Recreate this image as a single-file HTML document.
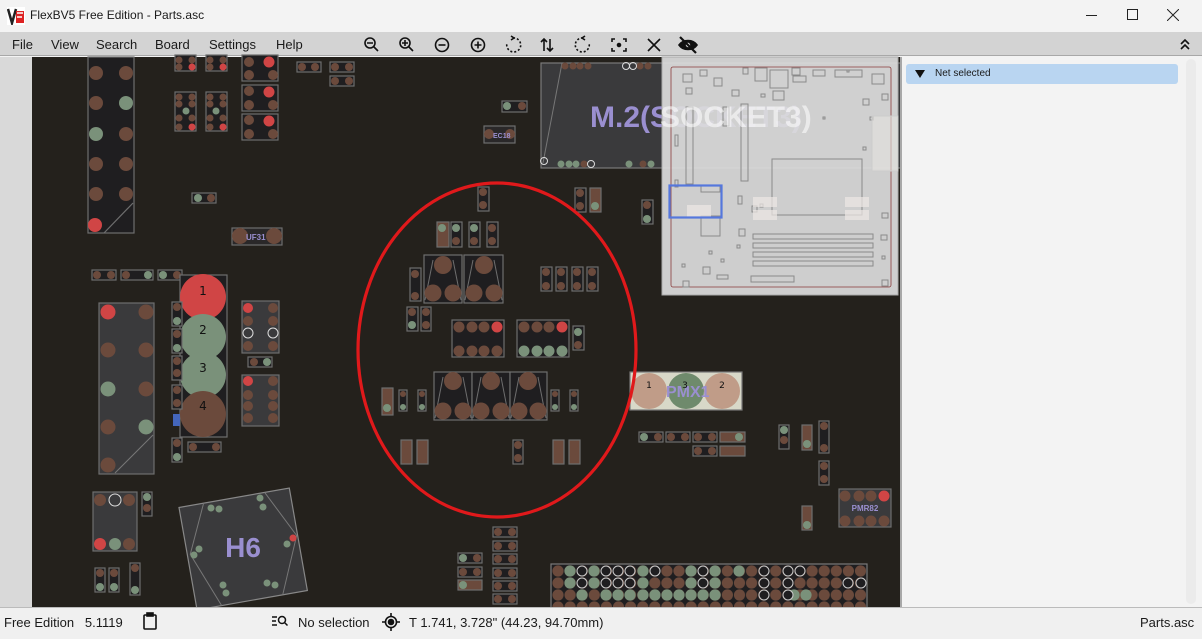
<!DOCTYPE html>
<html><head><meta charset="utf-8"><style>
*{margin:0;padding:0;box-sizing:border-box}
body{width:1202px;height:639px;overflow:hidden;background:#f3f3f3;font-family:"Liberation Sans","DejaVu Sans",sans-serif;position:relative}
.t{position:absolute;font-size:13px;color:#1a1a1a;white-space:nowrap}
</style></head><body>
<!-- title bar -->
<div style="position:absolute;left:0;top:0;width:1202px;height:32px;background:#f3f3f3"></div>
<svg style="position:absolute;left:7px;top:7px" width="18" height="18"><rect x="0" y="0" width="18" height="18" fill="#fff"/><path d="M1 2 L5 16 L9 2" stroke="#222" stroke-width="2.5" fill="none"/><rect x="9" y="4" width="8" height="12" fill="#d22"/><path d="M10 6h6M10 10h5" stroke="#fff" stroke-width="1.5"/></svg>
<div class="t" style="left:30px;top:8px;font-size:12px">FlexBV5 Free Edition - Parts.asc</div>
<div style="position:absolute;left:1086px;top:15px;width:11px;height:1px;background:#222"></div>
<div style="position:absolute;left:1127px;top:9px;width:11px;height:11px;border:1px solid #222"></div>
<svg style="position:absolute;left:1167px;top:9px" width="12" height="12"><path d="M0 0L12 12M12 0L0 12" stroke="#222" stroke-width="1"/></svg>
<!-- menu bar -->
<div style="position:absolute;left:0;top:32px;width:1202px;height:24px;background:#d3d3d3;border-bottom:1px solid #a8a8a8"></div>
<div class="t" style="left:12px;top:37px">File</div>
<div class="t" style="left:51px;top:37px">View</div>
<div class="t" style="left:96px;top:37px">Search</div>
<div class="t" style="left:155px;top:37px">Board</div>
<div class="t" style="left:209px;top:37px">Settings</div>
<div class="t" style="left:276px;top:37px">Help</div>
<svg style="position:absolute;left:360px;top:35px" width="340" height="20" fill="none" stroke="#111" stroke-width="1.6">
<circle cx="10" cy="8" r="5"/><path d="M14 12l4 4M7 8h6"/>
<g transform="translate(35,0)"><circle cx="10" cy="8" r="5"/><path d="M14 12l4 4M7 8h6M10 5v6"/></g>
<g transform="translate(70,0)"><circle cx="12" cy="10" r="6.5"/><path d="M8.5 10h7"/></g>
<g transform="translate(106,0)"><circle cx="12" cy="10" r="6.5"/><path d="M8.5 10h7M12 6.5v7"/></g>
<g transform="translate(141,0)"><path d="M12 3 A7 7 0 1 1 6 8" stroke-dasharray="2 2"/><path d="M10 1l3 2-3 2"/></g>
<g transform="translate(176,0)"><path d="M8 4v12M5 7l3-3 3 3M14 4v12M11 13l3 3 3-3"/></g>
<g transform="translate(211,0)"><path d="M12 3 A7 7 0 1 0 18 8" stroke-dasharray="2 2"/><path d="M14 1l-3 2 3 2"/></g>
<g transform="translate(247,0)"><path d="M5 7V4h3M16 4h3v3M19 13v3h-3M8 16H5v-3"/><circle cx="12" cy="10" r="1.5" fill="#111"/></g>
<g transform="translate(282,0)"><path d="M6 4l12 12M18 4L6 16"/></g>
<g transform="translate(316,0)"><path d="M3 10c4-6 14-6 18 0c-4 6-14 6-18 0z" fill="#111"/><circle cx="12" cy="10" r="3" fill="#d3d3d3"/><path d="M4 2l16 16" stroke-width="2.2"/></g>
</svg>
<svg style="position:absolute;left:1178px;top:37px" width="14" height="14" fill="none" stroke="#111" stroke-width="1.6"><path d="M3 7l4-4 4 4M3 12l4-4 4 4"/></svg>
<!-- left strip -->
<div style="position:absolute;left:0;top:57px;width:32px;height:551px;background:#d9d9d9"></div>
<!-- canvas -->
<svg style="position:absolute;left:0;top:0" width="902" height="608" viewBox="0 0 902 608">
<defs>
<pattern id="bga" x="552" y="565" width="12.1" height="12" patternUnits="userSpaceOnUse"><circle cx="6" cy="6" r="5.6" fill="#6b4a3c"/></pattern>
</defs>
<rect x="32" y="57" width="870" height="551" fill="#24211c"/>
<g stroke="#6e6e6e" stroke-width="1.2">
<rect x="88" y="57" width="46" height="176" fill="#1f1e20"/>
<path d="M104 233 L133 203" fill="none"/>
</g>
<g stroke="none">
<circle cx="96" cy="73" r="7" fill="#6b4a3c"/><circle cx="126" cy="73" r="7" fill="#6b4a3c"/>
<circle cx="96" cy="103" r="7" fill="#6b4a3c"/><circle cx="126" cy="103" r="7" fill="#7a917a"/>
<circle cx="96" cy="134" r="7" fill="#7a917a"/><circle cx="126" cy="134" r="7" fill="#6b4a3c"/>
<circle cx="96" cy="164" r="7" fill="#6b4a3c"/><circle cx="126" cy="164" r="7" fill="#6b4a3c"/>
<circle cx="96" cy="194" r="7" fill="#6b4a3c"/><circle cx="126" cy="194" r="7" fill="#6b4a3c"/>
<circle cx="95" cy="225" r="7" fill="#d04545"/>
</g>
<g stroke="#6e6e6e" stroke-width="1.2" fill="#1f1e20">
<rect x="175" y="55" width="21" height="16"/><rect x="206" y="55" width="21" height="16"/>
<rect x="175" y="92" width="21" height="39"/><rect x="206" y="92" width="21" height="39"/>
<rect x="242" y="55" width="36" height="26"/><rect x="242" y="85" width="36" height="26"/><rect x="242" y="114" width="36" height="26"/>
<rect x="297" y="62" width="24" height="10"/><rect x="330" y="62" width="24" height="10"/><rect x="330" y="76" width="24" height="10"/>
<rect x="192" y="193" width="24" height="10"/>
<rect x="232" y="228" width="50" height="17" fill="#2a2829"/>
<rect x="92" y="270" width="24" height="10"/><rect x="121" y="270" width="32" height="10"/><rect x="158" y="270" width="24" height="10"/>
<rect x="502" y="101" width="25" height="11"/>
<rect x="484" y="126" width="31" height="17" fill="#2a2829"/>
</g>
<g fill="#6b4a3c">
<circle cx="179" cy="60" r="3.5"/><circle cx="192" cy="60" r="3.5"/><circle cx="210" cy="60" r="3.5"/><circle cx="223" cy="60" r="3.5"/>
<circle cx="179" cy="67" r="3.5"/><circle cx="210" cy="67" r="3.5"/>
<circle cx="179" cy="97" r="3.5"/><circle cx="192" cy="97" r="3.5"/><circle cx="179" cy="104" r="3.5"/><circle cx="192" cy="104" r="3.5"/>
<circle cx="179" cy="118" r="3.5"/><circle cx="192" cy="118" r="3.5"/><circle cx="179" cy="127" r="3.5"/>
<circle cx="210" cy="97" r="3.5"/><circle cx="223" cy="97" r="3.5"/><circle cx="210" cy="104" r="3.5"/><circle cx="223" cy="104" r="3.5"/>
<circle cx="210" cy="118" r="3.5"/><circle cx="223" cy="118" r="3.5"/><circle cx="210" cy="127" r="3.5"/>
<circle cx="249" cy="62" r="5"/><circle cx="249" cy="75" r="5"/><circle cx="273" cy="75" r="5"/>
<circle cx="249" cy="91" r="5"/><circle cx="249" cy="105" r="5"/><circle cx="273" cy="105" r="5"/>
<circle cx="249" cy="120" r="5"/><circle cx="249" cy="134" r="5"/><circle cx="273" cy="134" r="5"/>
<circle cx="302" cy="67" r="4"/><circle cx="315" cy="67" r="4"/><circle cx="335" cy="67" r="4"/><circle cx="349" cy="67" r="4"/><circle cx="335" cy="81" r="4"/><circle cx="349" cy="81" r="4"/>
<circle cx="211" cy="198" r="4"/><circle cx="240" cy="236" r="8"/><circle cx="274" cy="236" r="8"/>
<circle cx="97" cy="275" r="4"/><circle cx="111" cy="275" r="4"/><circle cx="126" cy="275" r="4"/><circle cx="177" cy="275" r="4"/>
<circle cx="522" cy="106" r="4"/><circle cx="489" cy="134" r="5"/><circle cx="510" cy="134" r="5"/>
</g>
<g fill="#d04545"><circle cx="192" cy="67" r="3.5"/><circle cx="223" cy="67" r="3.5"/><circle cx="192" cy="127" r="3.5"/><circle cx="223" cy="127" r="3.5"/><circle cx="269" cy="62" r="5.5"/><circle cx="269" cy="92" r="5.5"/><circle cx="269" cy="121" r="5.5"/></g>
<g fill="#7a917a"><circle cx="186" cy="111" r="3.5"/><circle cx="216" cy="111" r="3.5"/><circle cx="198" cy="198" r="4"/><circle cx="148" cy="275" r="4"/><circle cx="163" cy="275" r="4"/><circle cx="507" cy="106" r="4"/></g>
<text x="246" y="240" font-family="Liberation Sans" font-weight="bold" font-size="8" fill="#9a8fd0">UF31</text>
<text x="493" y="138" font-family="Liberation Sans" font-weight="bold" font-size="7" fill="#9a8fd0">EC18</text>
<rect x="541" y="63" width="360" height="105" fill="#3a3a3c" stroke="#7a7a7a" stroke-width="1.2"/>
<path d="M543 163 L562 63" stroke="#777" fill="none"/>
<g fill="#6b4a3c"><circle cx="565" cy="66" r="3.5"/><circle cx="573" cy="66" r="3.5"/><circle cx="580" cy="66" r="3.5"/><circle cx="588" cy="66" r="3.5"/><circle cx="640" cy="66" r="3.5"/><circle cx="648" cy="66" r="3.5"/><circle cx="584" cy="164" r="3.5"/><circle cx="643" cy="164" r="3.5"/></g>
<g fill="#7a917a"><circle cx="561" cy="164" r="3.5"/><circle cx="569" cy="164" r="3.5"/><circle cx="576" cy="164" r="3.5"/><circle cx="629" cy="164" r="3.5"/><circle cx="651" cy="164" r="3.5"/></g>
<g fill="none" stroke="#ddd"><circle cx="626" cy="66" r="3.5"/><circle cx="633" cy="66" r="3.5"/><circle cx="544" cy="161" r="3.5"/><circle cx="591" cy="164" r="3.5"/></g>
<text x="590" y="127" font-family="Liberation Sans" font-weight="bold" font-size="30" fill="#9a8fd0">M.2(SOCKET3)</text>
<rect x="180" y="275" width="47" height="162" fill="#1f1e20" stroke="#6e6e6e" stroke-width="1.2"/>
<circle cx="203" cy="297" r="23" fill="#d04545"/><circle cx="203" cy="337" r="23" fill="#7a917a"/><circle cx="203" cy="375" r="23" fill="#7a917a"/><circle cx="203" cy="414" r="23" fill="#6b4a3c"/>
<g font-family="DejaVu Sans" font-size="12" fill="#111" text-anchor="middle"><text x="203" y="295">1</text><text x="203" y="334">2</text><text x="203" y="372">3</text><text x="203" y="410">4</text></g>
<rect x="99" y="303" width="55" height="171" fill="#3a3a3c" stroke="#6e6e6e" stroke-width="1.2"/>
<path d="M115 473 L153 435" stroke="#777"/>
<circle cx="108" cy="312" r="7.5" fill="#d04545"/><circle cx="146" cy="312" r="7.5" fill="#6b4a3c"/>
<circle cx="108" cy="350" r="7.5" fill="#6b4a3c"/><circle cx="146" cy="350" r="7.5" fill="#6b4a3c"/>
<circle cx="108" cy="389" r="7.5" fill="#7a917a"/><circle cx="146" cy="389" r="7.5" fill="#6b4a3c"/>
<circle cx="108" cy="427" r="7.5" fill="#6b4a3c"/><circle cx="146" cy="427" r="7.5" fill="#7a917a"/>
<circle cx="108" cy="465" r="7.5" fill="#6b4a3c"/>
<g stroke="#6e6e6e" stroke-width="1.2" fill="#3a3a3c">
<rect x="242" y="301" width="37" height="52"/><rect x="242" y="375" width="37" height="51"/>
<rect x="93" y="492" width="44" height="59"/>
</g>
<g stroke="#6e6e6e" stroke-width="1.2" fill="#1f1e20">
<rect x="172" y="302" width="10" height="24"/><rect x="172" y="329" width="10" height="24"/><rect x="172" y="356" width="10" height="24"/><rect x="172" y="385" width="10" height="24"/><rect x="172" y="438" width="10" height="24"/>
<rect x="248" y="357" width="24" height="10"/><rect x="188" y="442" width="33" height="10"/>
<rect x="142" y="492" width="10" height="24"/>
<rect x="95" y="568" width="10" height="24"/><rect x="109" y="568" width="10" height="24"/><rect x="130" y="563" width="10" height="32"/>
</g>
<rect x="173" y="414" width="7" height="12" fill="#4466bb"/>
<g fill="#6b4a3c"><circle cx="248" cy="321" r="5"/><circle cx="273" cy="321" r="5"/><circle cx="273" cy="308" r="5"/><circle cx="248" cy="346" r="5"/><circle cx="273" cy="346" r="5"/>
<circle cx="273" cy="381" r="5"/><circle cx="248" cy="395" r="5"/><circle cx="273" cy="395" r="5"/><circle cx="248" cy="406" r="5"/><circle cx="273" cy="406" r="5"/><circle cx="248" cy="418" r="5"/><circle cx="273" cy="418" r="5"/>
<circle cx="254" cy="362" r="4"/><circle cx="193" cy="447" r="4"/><circle cx="216" cy="447" r="4"/>
<circle cx="177" cy="307" r="4"/><circle cx="177" cy="334" r="4"/><circle cx="177" cy="361" r="4"/><circle cx="177" cy="373" r="4"/><circle cx="177" cy="390" r="4"/><circle cx="177" cy="403" r="4"/><circle cx="177" cy="443" r="4"/>
<circle cx="100" cy="500" r="6"/><circle cx="129" cy="500" r="6"/><circle cx="129" cy="544" r="6"/><circle cx="147" cy="508" r="4"/>
<circle cx="100" cy="573" r="4"/><circle cx="114" cy="573" r="4"/><circle cx="135" cy="568" r="4"/></g>
<g fill="#7a917a"><circle cx="177" cy="321" r="4"/><circle cx="177" cy="348" r="4"/><circle cx="177" cy="457" r="4"/><circle cx="267" cy="362" r="4"/><circle cx="115" cy="544" r="6"/><circle cx="147" cy="497" r="4"/><circle cx="100" cy="587" r="4"/><circle cx="114" cy="587" r="4"/><circle cx="135" cy="590" r="4"/></g>
<g fill="#d04545"><circle cx="248" cy="308" r="5"/><circle cx="248" cy="381" r="5"/><circle cx="100" cy="544" r="6"/></g>
<g fill="none" stroke="#ddd"><circle cx="248" cy="333" r="5"/><circle cx="273" cy="333" r="5"/><circle cx="115" cy="500" r="6"/></g>
<g transform="rotate(-10 243 548)">
<rect x="187" y="497" width="112" height="104" fill="#3a3a3c" stroke="#888" stroke-width="1.2"/>
<path d="M212 497 L190 545 L212 601 M274 497 L298 545 L274 601" stroke="#777" fill="none"/>
</g>
<g fill="#7a917a"><circle cx="211" cy="508" r="3.5"/><circle cx="219" cy="509" r="3.5"/><circle cx="260" cy="498" r="3.5"/><circle cx="263" cy="507" r="3.5"/><circle cx="194" cy="555" r="3.5"/><circle cx="199" cy="549" r="3.5"/><circle cx="287" cy="544" r="3.5"/><circle cx="223" cy="585" r="3.5"/><circle cx="226" cy="593" r="3.5"/><circle cx="267" cy="583" r="3.5"/><circle cx="275" cy="585" r="3.5"/></g>
<circle cx="293" cy="538" r="3.5" fill="#d04545"/>
<text x="243" y="557" text-anchor="middle" font-family="Liberation Sans" font-weight="bold" font-size="28" fill="#9a8fd0">H6</text>
<g stroke="#6e6e6e" stroke-width="1.2" fill="#1f1e20">
<rect x="478" y="187" width="11" height="24"/>
<rect x="437" y="222" width="12" height="25" fill="#6b4a3c"/><rect x="451" y="222" width="11" height="25"/><rect x="469" y="222" width="11" height="25"/><rect x="487" y="222" width="11" height="25"/>
<rect x="410" y="268" width="11" height="33"/>
<rect x="407" y="307" width="11" height="24"/><rect x="421" y="307" width="10" height="24"/>
<rect x="573" y="326" width="11" height="24"/>
<rect x="382" y="388" width="11" height="27" fill="#6b4a3c"/><rect x="399" y="390" width="8" height="21"/><rect x="418" y="390" width="8" height="21"/><rect x="551" y="390" width="8" height="21"/><rect x="570" y="390" width="8" height="21"/>
<rect x="401" y="440" width="11" height="24" fill="#6b4a3c"/><rect x="417" y="440" width="11" height="24" fill="#6b4a3c"/><rect x="513" y="440" width="10" height="24"/><rect x="553" y="440" width="11" height="24" fill="#6b4a3c"/><rect x="569" y="440" width="11" height="24" fill="#6b4a3c"/>
<rect x="575" y="188" width="11" height="24"/><rect x="590" y="188" width="11" height="24" fill="#6b4a3c"/>
<rect x="541" y="267" width="11" height="24"/><rect x="556" y="267" width="11" height="24"/><rect x="572" y="267" width="11" height="24"/><rect x="587" y="267" width="11" height="24"/>
<rect x="642" y="200" width="11" height="24"/>
<rect x="779" y="425" width="10" height="24"/><rect x="802" y="425" width="10" height="25" fill="#6b4a3c"/><rect x="819" y="421" width="10" height="32"/><rect x="819" y="461" width="10" height="24"/><rect x="802" y="506" width="10" height="24" fill="#6b4a3c"/>
<rect x="639" y="432" width="24" height="10"/><rect x="666" y="432" width="24" height="10"/><rect x="693" y="432" width="24" height="10"/><rect x="720" y="432" width="25" height="10" fill="#6b4a3c"/><rect x="693" y="446" width="24" height="10"/><rect x="720" y="446" width="25" height="10" fill="#6b4a3c"/>
<rect x="493" y="527" width="24" height="10"/><rect x="493" y="541" width="24" height="10"/><rect x="493" y="554" width="24" height="10"/><rect x="493" y="568" width="24" height="10"/><rect x="493" y="581" width="24" height="10"/><rect x="493" y="594" width="24" height="10"/>
<rect x="458" y="553" width="24" height="10"/><rect x="458" y="567" width="24" height="10"/><rect x="458" y="580" width="24" height="10" fill="#6b4a3c"/>
</g>
<g fill="#6b4a3c">
<circle cx="483" cy="192" r="4"/><circle cx="483" cy="205" r="4"/><circle cx="456" cy="241" r="4"/><circle cx="474" cy="241" r="4"/><circle cx="492" cy="228" r="4"/><circle cx="492" cy="241" r="4"/>
<circle cx="415" cy="274" r="4"/><circle cx="415" cy="296" r="4"/><circle cx="412" cy="312" r="4"/><circle cx="426" cy="312" r="4"/><circle cx="426" cy="325" r="4"/><circle cx="578" cy="345" r="4"/>
<circle cx="387" cy="394" r="4"/><circle cx="403" cy="394" r="3"/><circle cx="422" cy="394" r="3"/><circle cx="555" cy="394" r="3"/><circle cx="574" cy="394" r="3"/>
<circle cx="406" cy="445" r="4"/><circle cx="406" cy="458" r="4"/><circle cx="422" cy="445" r="4"/><circle cx="422" cy="458" r="4"/><circle cx="518" cy="445" r="4"/><circle cx="518" cy="458" r="4"/><circle cx="558" cy="445" r="4"/><circle cx="558" cy="458" r="4"/><circle cx="574" cy="445" r="4"/><circle cx="574" cy="458" r="4"/>
<circle cx="580" cy="193" r="4"/><circle cx="580" cy="206" r="4"/><circle cx="595" cy="193" r="4"/>
<circle cx="546" cy="272" r="4"/><circle cx="546" cy="286" r="4"/><circle cx="561" cy="272" r="4"/><circle cx="561" cy="286" r="4"/><circle cx="577" cy="272" r="4"/><circle cx="577" cy="286" r="4"/><circle cx="592" cy="272" r="4"/><circle cx="592" cy="286" r="4"/>
<circle cx="647" cy="205" r="4"/>
<circle cx="784" cy="440" r="4"/><circle cx="807" cy="430" r="4"/><circle cx="824" cy="426" r="4"/><circle cx="824" cy="448" r="4"/><circle cx="824" cy="466" r="4"/><circle cx="824" cy="479" r="4"/><circle cx="807" cy="511" r="4"/>
<circle cx="658" cy="437" r="4"/><circle cx="671" cy="437" r="4"/><circle cx="685" cy="437" r="4"/><circle cx="698" cy="437" r="4"/><circle cx="712" cy="437" r="4"/><circle cx="725" cy="437" r="4"/><circle cx="698" cy="451" r="4"/><circle cx="712" cy="451" r="4"/><circle cx="725" cy="451" r="4"/><circle cx="739" cy="451" r="4"/>
<circle cx="498" cy="532" r="4"/><circle cx="512" cy="532" r="4"/><circle cx="498" cy="546" r="4"/><circle cx="512" cy="546" r="4"/><circle cx="498" cy="559" r="4"/><circle cx="512" cy="559" r="4"/><circle cx="498" cy="573" r="4"/><circle cx="512" cy="573" r="4"/><circle cx="498" cy="586" r="4"/><circle cx="512" cy="586" r="4"/><circle cx="498" cy="599" r="4"/><circle cx="512" cy="599" r="4"/>
<circle cx="477" cy="558" r="4"/><circle cx="463" cy="572" r="4"/><circle cx="477" cy="572" r="4"/><circle cx="477" cy="585" r="4"/>
</g>
<g fill="#7a917a">
<circle cx="442" cy="228" r="4"/><circle cx="456" cy="228" r="4"/><circle cx="474" cy="228" r="4"/><circle cx="412" cy="325" r="4"/><circle cx="578" cy="332" r="4"/>
<circle cx="387" cy="408" r="4"/><circle cx="403" cy="407" r="3"/><circle cx="422" cy="407" r="3"/><circle cx="555" cy="407" r="3"/><circle cx="574" cy="407" r="3"/>
<circle cx="595" cy="206" r="4"/><circle cx="647" cy="219" r="4"/>
<circle cx="784" cy="430" r="4"/><circle cx="807" cy="444" r="4"/><circle cx="807" cy="525" r="4"/>
<circle cx="644" cy="437" r="4"/><circle cx="739" cy="437" r="4"/><circle cx="463" cy="558" r="4"/><circle cx="463" cy="585" r="4"/>
</g>
<g stroke="#6e6e6e" stroke-width="1.2" fill="#1f1e20">
<rect x="424" y="255" width="38" height="48"/><rect x="464" y="255" width="39" height="48"/>
<rect x="434" y="372" width="38" height="48"/><rect x="472" y="372" width="38" height="48"/><rect x="510" y="372" width="37" height="48"/>
<rect x="452" y="320" width="52" height="37"/><rect x="517" y="320" width="52" height="37"/>
</g>
<g stroke="#6e6e6e" fill="none"><path d="M425 300L433 260M461 300L453 260M465 300L473 260M502 300L494 260M435 418L443 377M471 418L463 377M473 418L481 377M509 418L501 377M511 418L519 377M546 418L538 377"/></g>
<g fill="#6b4a3c">
<circle cx="443" cy="265" r="9"/><circle cx="433" cy="293" r="8.5"/><circle cx="453" cy="293" r="8.5"/>
<circle cx="484" cy="265" r="9"/><circle cx="474" cy="293" r="8.5"/><circle cx="494" cy="293" r="8.5"/>
<circle cx="453" cy="381" r="9"/><circle cx="443" cy="411" r="8.5"/><circle cx="463" cy="411" r="8.5"/>
<circle cx="491" cy="381" r="9"/><circle cx="481" cy="411" r="8.5"/><circle cx="501" cy="411" r="8.5"/>
<circle cx="528" cy="381" r="9"/><circle cx="519" cy="411" r="8.5"/><circle cx="538" cy="411" r="8.5"/>
<circle cx="459" cy="327" r="5.5"/><circle cx="472" cy="327" r="5.5"/><circle cx="484" cy="327" r="5.5"/>
<circle cx="459" cy="351" r="5.5"/><circle cx="472" cy="351" r="5.5"/><circle cx="484" cy="351" r="5.5"/><circle cx="497" cy="351" r="5.5"/>
<circle cx="524" cy="327" r="5.5"/><circle cx="537" cy="327" r="5.5"/><circle cx="549" cy="327" r="5.5"/>
</g>
<g fill="#7a917a"><circle cx="524" cy="351" r="5.5"/><circle cx="537" cy="351" r="5.5"/><circle cx="549" cy="351" r="5.5"/><circle cx="562" cy="351" r="5.5"/></g>
<g fill="#d04545"><circle cx="497" cy="327" r="5.5"/><circle cx="562" cy="327" r="5.5"/></g>
<rect x="630" y="372" width="112" height="38" fill="#d8d8c8" stroke="#777" stroke-width="1.2"/>
<circle cx="649" cy="391" r="18" fill="#c09c88"/><circle cx="686" cy="391" r="18" fill="#6f8a6c"/><circle cx="722" cy="391" r="18" fill="#c09c88"/>
<text x="666" y="397" font-family="Liberation Sans" font-weight="bold" font-size="16" fill="#9a8fd0">PMX1</text>
<g font-family="DejaVu Sans" font-size="9" fill="#111" text-anchor="middle"><text x="649" y="388">1</text><text x="685" y="388">3</text><text x="722" y="388">2</text></g>
<rect x="839" y="489" width="52" height="38" fill="#3a3a3c" stroke="#6e6e6e" stroke-width="1.2"/>
<g fill="#6b4a3c"><circle cx="845" cy="496" r="5.5"/><circle cx="859" cy="496" r="5.5"/><circle cx="871" cy="496" r="5.5"/><circle cx="845" cy="521" r="5.5"/><circle cx="859" cy="521" r="5.5"/><circle cx="871" cy="521" r="5.5"/><circle cx="884" cy="521" r="5.5"/></g>
<circle cx="884" cy="496" r="5.5" fill="#d04545"/>
<text x="865" y="511" text-anchor="middle" font-family="Liberation Sans" font-weight="bold" font-size="8" fill="#9a8fd0">PMR82</text>
<rect x="551" y="564" width="316" height="44" fill="#1f1e20" stroke="#7a7a7a" stroke-width="1.2"/>
<rect x="552" y="565" width="314" height="43" fill="url(#bga)"/>
<g fill="#7a917a"><circle cx="570" cy="571" r="5.6"/><circle cx="594" cy="571" r="5.6"/><circle cx="643" cy="571" r="5.6"/><circle cx="691" cy="571" r="5.6"/><circle cx="715" cy="571" r="5.6"/><circle cx="739" cy="571" r="5.6"/>
<circle cx="570" cy="583" r="5.6"/><circle cx="594" cy="583" r="5.6"/><circle cx="643" cy="583" r="5.6"/><circle cx="691" cy="583" r="5.6"/><circle cx="715" cy="583" r="5.6"/>
<circle cx="582" cy="595" r="5.6"/><circle cx="606" cy="595" r="5.6"/><circle cx="618" cy="595" r="5.6"/><circle cx="630" cy="595" r="5.6"/><circle cx="643" cy="595" r="5.6"/><circle cx="655" cy="595" r="5.6"/><circle cx="667" cy="595" r="5.6"/><circle cx="679" cy="595" r="5.6"/><circle cx="691" cy="595" r="5.6"/><circle cx="703" cy="595" r="5.6"/><circle cx="715" cy="595" r="5.6"/><circle cx="794" cy="595" r="5.6"/><circle cx="806" cy="595" r="5.6"/></g>
<g fill="#1f1e20" stroke="#ccc"><circle cx="582" cy="571" r="5"/><circle cx="606" cy="571" r="5"/><circle cx="618" cy="571" r="5"/><circle cx="630" cy="571" r="5"/><circle cx="655" cy="571" r="5"/><circle cx="703" cy="571" r="5"/><circle cx="764" cy="571" r="5"/><circle cx="788" cy="571" r="5"/><circle cx="800" cy="571" r="5"/>
<circle cx="582" cy="583" r="5"/><circle cx="606" cy="583" r="5"/><circle cx="618" cy="583" r="5"/><circle cx="630" cy="583" r="5"/><circle cx="703" cy="583" r="5"/><circle cx="764" cy="583" r="5"/><circle cx="788" cy="583" r="5"/><circle cx="848" cy="583" r="5"/><circle cx="861" cy="583" r="5"/>
<circle cx="764" cy="595" r="5"/><circle cx="788" cy="595" r="5"/></g>
<ellipse cx="497" cy="350" rx="139" ry="167" fill="none" stroke="#e0191b" stroke-width="3.2"/>
<!-- minimap -->
<rect x="662" y="57" width="236" height="238" fill="#dcdcdc" fill-opacity="0.93" stroke="#aaa"/>
<rect x="671" y="67" width="220" height="220" rx="2" fill="none" stroke="#8a3b3b" stroke-width="0.8"/>
<g fill="none" stroke="#8a8a8a" stroke-width="1">
<rect x="683" y="74" width="9" height="8"/><rect x="686" y="88" width="6" height="6"/><rect x="714" y="78" width="8" height="8"/><rect x="700" y="70" width="7" height="6"/><rect x="743" y="68" width="5" height="6"/>
<rect x="755" y="68" width="12" height="13"/><rect x="770" y="70" width="18" height="18"/><rect x="773" y="91" width="11" height="9"/><rect x="792" y="68" width="8" height="7"/><rect x="793" y="76" width="13" height="6"/><rect x="813" y="70" width="12" height="6"/><rect x="835" y="70" width="27" height="7"/>
<rect x="872" y="74" width="12" height="10"/><rect x="863" y="99" width="6" height="6"/><rect x="882" y="94" width="6" height="6"/><rect x="732" y="90" width="7" height="6"/><rect x="761" y="94" width="4" height="3"/>
<rect x="686" y="107" width="7" height="77"/><rect x="723" y="107" width="6" height="19"/><rect x="741" y="104" width="7" height="77"/>
<rect x="675" y="135" width="3" height="11"/><rect x="675" y="180" width="3" height="7"/>
<rect x="772" y="159" width="90" height="56"/><rect x="701" y="186" width="19" height="6"/><rect x="701" y="216" width="19" height="20"/>
<rect x="738" y="196" width="4" height="8"/><rect x="752" y="206" width="5" height="6"/><rect x="760" y="204" width="3" height="3"/>
<rect x="753" y="234" width="120" height="5"/><rect x="753" y="243" width="120" height="5"/><rect x="753" y="252" width="120" height="5"/><rect x="753" y="261" width="120" height="5"/>
<rect x="751" y="276" width="43" height="6"/><rect x="717" y="275" width="11" height="4"/><rect x="739" y="229" width="6" height="7"/>
<rect x="881" y="235" width="6" height="5"/><rect x="882" y="256" width="3" height="3"/><rect x="682" y="264" width="3" height="3"/><rect x="703" y="267" width="7" height="7"/><rect x="709" y="251" width="3" height="3"/><rect x="721" y="259" width="3" height="3"/><rect x="683" y="281" width="6" height="6"/><rect x="882" y="280" width="6" height="6"/><rect x="882" y="213" width="6" height="5"/>
<rect x="737" y="245" width="3" height="3"/><rect x="847" y="70" width="2" height="2"/><rect x="823" y="117" width="2" height="2"/><rect x="870" y="117" width="3" height="3"/><rect x="863" y="147" width="3" height="3"/>
</g>
<g fill="#eee8e6" fill-opacity="0.7"><rect x="687" y="205" width="24" height="12"/><rect x="753" y="197" width="24" height="10"/><rect x="753" y="210" width="24" height="10"/><rect x="845" y="197" width="24" height="10"/><rect x="845" y="210" width="24" height="10"/></g>
<rect x="872" y="116" width="26" height="55" fill="#e4e2e0" fill-opacity="0.6" stroke="#ccc"/>
<text x="660" y="127" font-family="Liberation Sans" font-weight="bold" font-size="30" fill="#ffffff" fill-opacity="0.55">SOCKET3)</text>
<rect x="669.5" y="185.5" width="52" height="32" fill="none" stroke="#5577dd" stroke-width="2.2"/>
</svg>
<!-- right panel -->
<div style="position:absolute;left:900px;top:57px;width:2px;height:551px;background:#a8a8a8"></div>
<div style="position:absolute;left:902px;top:57px;width:300px;height:551px;background:#f3f3f3"></div>
<div style="position:absolute;left:906px;top:64px;width:272px;height:20px;background:#b9d5f1;border-radius:3px"></div>
<svg style="position:absolute;left:914px;top:69px" width="12" height="10"><path d="M1 1h10L6 9z" fill="#111"/></svg>
<div class="t" style="left:935px;top:68px;font-size:10px">Net selected</div>
<div style="position:absolute;left:1186px;top:59px;width:10px;height:545px;background:#ebebeb;border-radius:5px"></div>
<!-- status bar -->
<div style="position:absolute;left:0;top:607px;width:1202px;height:32px;background:#f0f0f0;border-top:1px solid #bbb"></div>
<div class="t" style="left:4px;top:615px">Free Edition&nbsp;&nbsp; 5.1119</div>
<svg style="position:absolute;left:142px;top:612px" width="16" height="18" fill="none" stroke="#111" stroke-width="1.6"><rect x="2" y="3" width="12" height="14" rx="1"/><rect x="5" y="1" width="6" height="3" fill="#111"/></svg>
<svg style="position:absolute;left:271px;top:615px" width="18" height="12" fill="none" stroke="#111" stroke-width="1.5"><path d="M1 2h5M1 6h4M1 10h5"/><circle cx="11" cy="5" r="3.5"/><path d="M13.5 7.5l3 3"/></svg>
<div class="t" style="left:298px;top:615px">No selection</div>
<svg style="position:absolute;left:382px;top:613px" width="18" height="18" fill="none" stroke="#111" stroke-width="1.6"><circle cx="9" cy="9" r="5.5"/><circle cx="9" cy="9" r="2.5" fill="#111"/><path d="M9 0v3M9 15v3M0 9h3M15 9h3"/></svg>
<div class="t" style="left:409px;top:615px">T 1.741, 3.728" (44.23, 94.70mm)</div>
<div class="t" style="left:1140px;top:615px">Parts.asc</div>
</body></html>
